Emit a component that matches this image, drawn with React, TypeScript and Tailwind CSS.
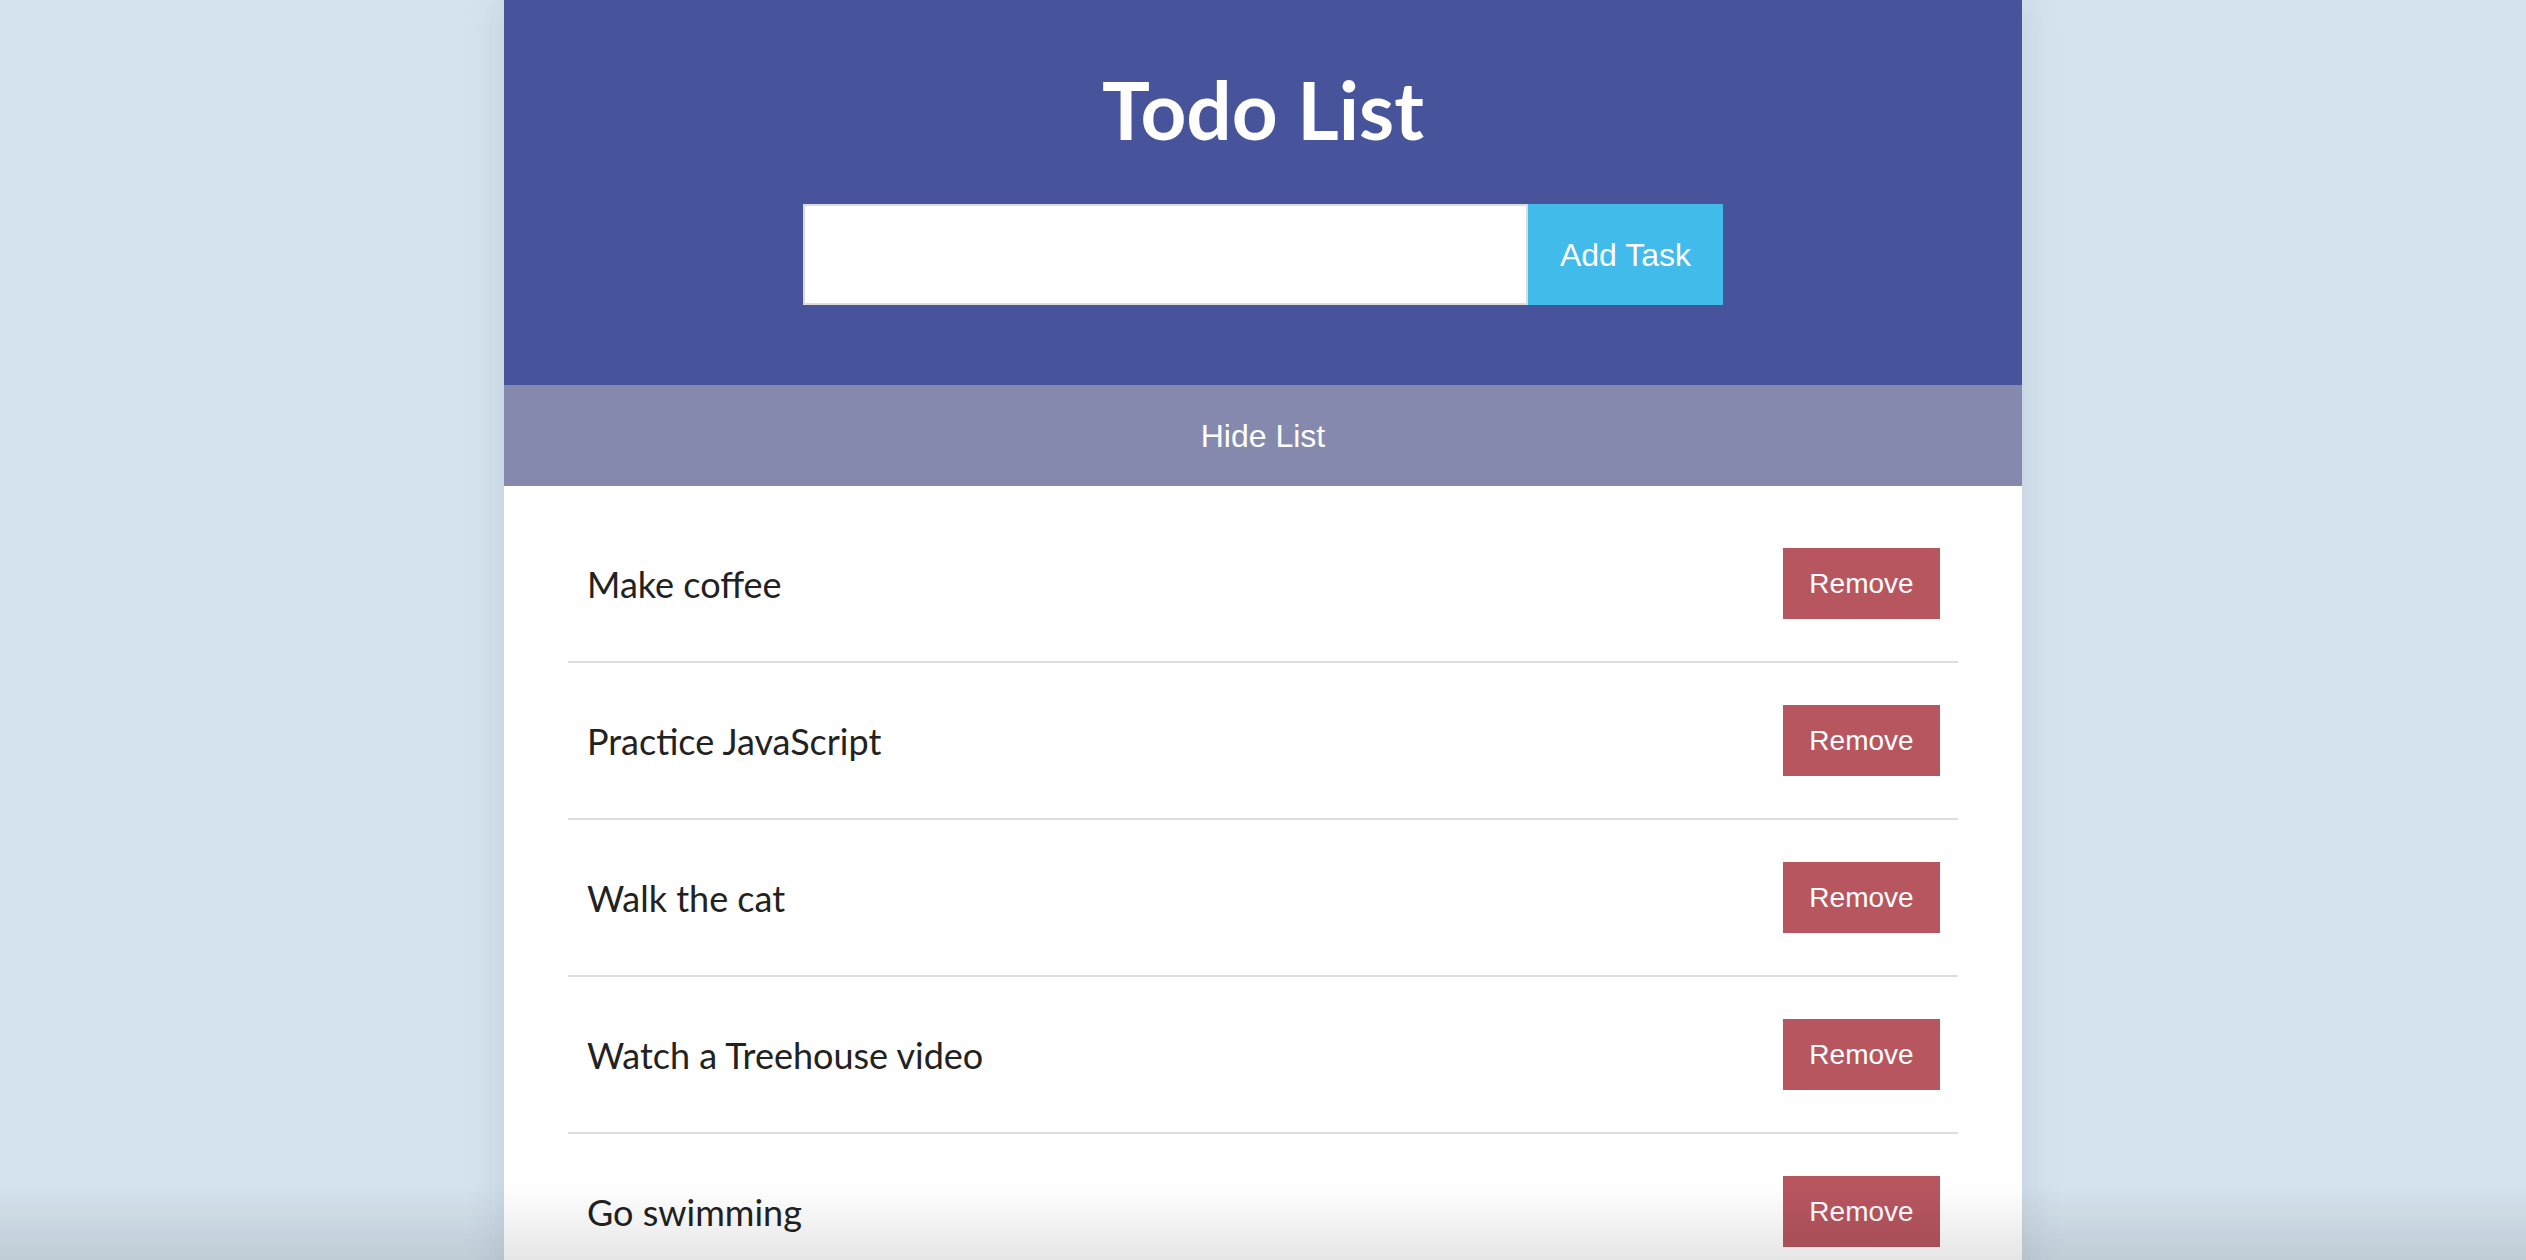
import { useState } from 'react';

const INITIAL = [
  'Make coffee',
  'Practice JavaScript',
  'Walk the cat',
  'Watch a Treehouse video',
  'Go swimming',
];

export default function App() {
  const [tasks, setTasks] = useState(INITIAL);
  const [text, setText] = useState('');
  const [hidden, setHidden] = useState(false);

  const addTask = (e: React.FormEvent) => {
    e.preventDefault();
    if (!text.trim()) return;
    setTasks([...tasks, text.trim()]);
    setText('');
  };

  return (
    <div className="min-h-screen bg-[#d5e3ee] font-['Lato',sans-serif]">
      <div className="mx-auto w-[1518px] min-h-screen bg-white shadow-[0_0_36px_rgba(60,80,110,0.14)]">
        <header className="bg-[#47549b] pt-[61px] pb-[80px] flex flex-col items-center">
          <h1 className="text-[80px] leading-[1.2] font-bold text-white">Todo List</h1>
          <form onSubmit={addTask} className="mt-[47px] flex">
            <input
              value={text}
              onChange={(e) => setText(e.target.value)}
              className="w-[725px] h-[101px] bg-white border-2 border-[#dcdcdc] px-4 text-[32px] outline-none"
            />
            <button
              type="submit"
              className="w-[195px] h-[101px] bg-[#41bbea] text-white text-[32px] font-['Liberation_Sans',Arial,sans-serif]"
            >
              Add Task
            </button>
          </form>
        </header>

        <button
          onClick={() => setHidden(!hidden)}
          className="w-full h-[101px] bg-[#8489ad] text-white text-[32px] font-['Liberation_Sans',Arial,sans-serif]"
        >
          {hidden ? 'Show List' : 'Hide List'}
        </button>

        {!hidden && (
          <ul className="mx-[64px] pt-[20px]">
            {tasks.map((t, i) => (
              <li
                key={t + i}
                className="h-[157px] flex items-center justify-between pl-[19px] pr-[18px] border-b-2 border-[#dddddd]"
              >
                <span className="text-[36px] text-[#222222]">{t}</span>
                <button
                  onClick={() => setTasks(tasks.filter((_, j) => j !== i))}
                  className="w-[157px] h-[71px] bg-[#b85660] text-white text-[28px] font-['Liberation_Sans',Arial,sans-serif]"
                >
                  Remove
                </button>
              </li>
            ))}
          </ul>
        )}
      </div>

      {/* bottom fade of the window */}
      <div className="fixed bottom-0 inset-x-0 h-[75px] bg-gradient-to-b from-transparent to-black/10 pointer-events-none" />
    </div>
  );
}
